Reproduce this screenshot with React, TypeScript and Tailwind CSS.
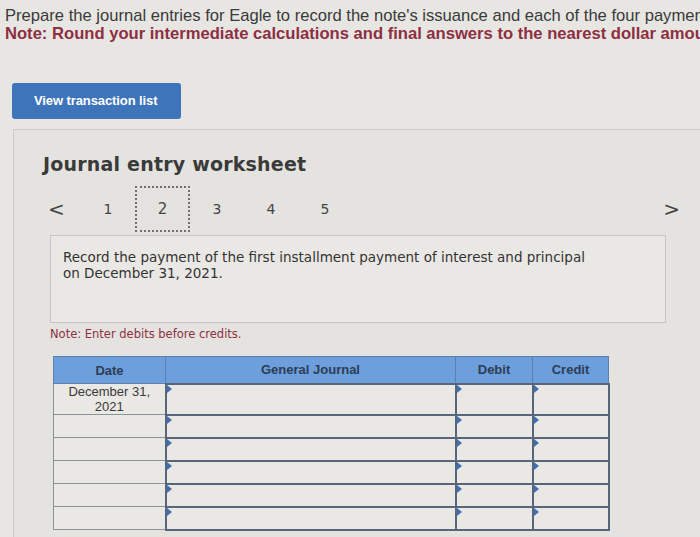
import React from "react";

const Tick = () => (
  <span className="absolute left-0 top-0 w-0 h-0 border-t-[4px] border-b-[4px] border-l-[5px] border-t-transparent border-b-transparent border-l-[#3f6fb0]" />
);

export default function App() {
  const rows = [0, 1, 2, 3, 4, 5];
  return (
    <div className="w-[700px] h-[537px] overflow-hidden bg-[#e7e6e2] text-[#333]">
      <div className="pl-[5px] pt-[7px] font-['Liberation_Sans',sans-serif] text-[16.6px] leading-[18px] whitespace-nowrap">
        <p className="text-[#3a3a3a]">Prepare the journal entries for Eagle to record the note's issuance and each of the four payments.</p>
        <p className="font-bold text-[#8e2f42]">Note: Round your intermediate calculations and final answers to the nearest dollar amount.</p>
      </div>

      <div className="pl-[12px] pt-[40px]">
        <button className="w-[169px] h-[36px] rounded-[3px] bg-[#3e74ba] text-left pl-[22px] font-['Liberation_Sans',sans-serif] font-bold text-[13px] text-white tracking-[-0.1px]">
          View transaction list
        </button>
      </div>

      <div className="ml-[13px] mt-[10px] h-[420px] border-t border-l border-[#cdccc8] bg-[#e4e3df] font-['DejaVu_Sans',sans-serif]">
        <h2 className="pl-[29px] pt-[21px] text-[19px] leading-[26px] font-bold text-[#3a3a3a] tracking-[0.2px]">Journal entry worksheet</h2>

        <div className="flex items-center h-[46px] mt-[9px] pl-[34px] pr-[20px] text-[14px] text-[#444]">
          <span className="text-[20px] text-[#444] w-[33px]">&lt;</span>
          <div className="flex items-center">
            <span className="w-[54px] text-center">1</span>
            <span className="w-[55px] h-[46px] flex items-center justify-center border-2 border-dotted border-[#6f6f75] text-[15px]">2</span>
            <span className="w-[54px] text-center">3</span>
            <span className="w-[54px] text-center">4</span>
            <span className="w-[54px] text-center">5</span>
          </div>
          <span className="ml-auto text-[20px] text-[#444]">&gt;</span>
        </div>

        <div className="ml-[36px] mt-[3px] w-[616px] h-[88px] border border-[#c4c4c0] bg-[#e9e8e4] px-[12px] pt-[13px] text-[13.5px] leading-[16px] text-[#333]">
          Record the payment of the first installment payment of interest and principal
          <br />
          on December 31, 2021.
        </div>

        <p className="ml-[36px] mt-[3px] text-[11.5px] text-[#8e2f42]">Note: Enter debits before credits.</p>

        <table className="ml-[39px] mt-[13px] border-collapse font-['Liberation_Sans',sans-serif] text-[13px]">
          <thead>
            <tr className="h-[27px] bg-[#6c9fdb] text-[#2d3d56]">
              <th className="w-[112px] border border-[#5a7fb0] font-bold">Date</th>
              <th className="w-[290px] border border-[#5a7fb0] font-bold">General Journal</th>
              <th className="w-[77px] border border-[#5a7fb0] font-bold">Debit</th>
              <th className="w-[76px] border border-[#5a7fb0] font-bold">Credit</th>
            </tr>
          </thead>
          <tbody>
            {rows.map((r) => (
              <tr key={r} className={r === 0 ? "h-[30px]" : "h-[23px]"}>
                <td className="border border-[#8d939b] text-center align-top text-[13px] leading-[15px] text-[#3a3a3a] bg-[#e9e8e4]">
                  {r === 0 ? (
                    <>
                      December 31,
                      <br />
                      2021
                    </>
                  ) : null}
                </td>
                <td className="relative border-2 border-[#596679] bg-[#e9e8e4]">
                  <Tick />
                </td>
                <td className="relative border-2 border-[#596679] bg-[#e9e8e4]">
                  <Tick />
                </td>
                <td className="relative border-2 border-[#596679] bg-[#e9e8e4]">
                  <Tick />
                </td>
              </tr>
            ))}
          </tbody>
        </table>
      </div>
    </div>
  );
}
